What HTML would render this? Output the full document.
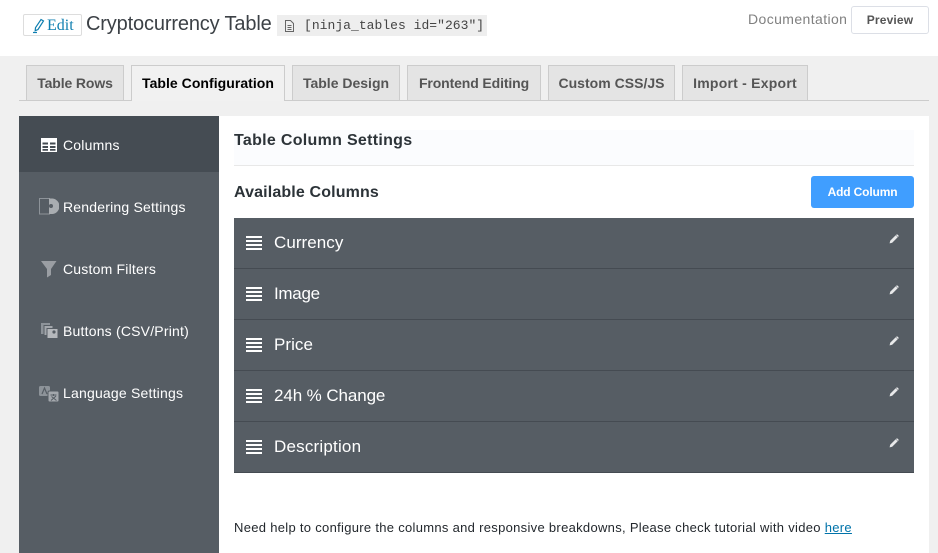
<!DOCTYPE html>
<html><head><meta charset="utf-8">
<style>
html,body{margin:0;padding:0}
body{width:938px;height:553px;overflow:hidden;position:relative;background:#f0f0f0;font-family:"Liberation Sans",sans-serif;-webkit-font-smoothing:antialiased}
.a{position:absolute;white-space:nowrap}
.tab{position:absolute;top:65px;height:35px;box-sizing:border-box;border:1px solid #ccc;border-bottom:0;background:#e4e4e4;color:#555;font-size:14px;font-weight:bold;line-height:35px;text-align:center;letter-spacing:-.12px}
.tab.on{background:#f1f1f1;color:#000;height:36px;z-index:2;letter-spacing:.04px}
.side{position:absolute;left:63px;color:#fff;font-size:14px;line-height:18px;white-space:nowrap;letter-spacing:.2px}
.row{position:absolute;left:234px;width:680px;height:50px;background:#565d64;border-bottom:1px solid #454b52}
.row .t{position:absolute;left:40px;top:15px;color:#fff;font-size:17px;line-height:20px}
.row .b{position:absolute;left:12px;width:16px;height:2px;background:#fff}
.row svg{position:absolute;left:655px;top:16px}
svg{display:block}
</style></head><body>
<div class="a" style="left:0;top:0;width:938px;height:56px;background:#fff"></div>

<div class="a" style="left:23px;top:14px;width:59px;height:22px;box-sizing:border-box;border:1px solid #ddd;border-radius:2px;background:#fff"></div>
<svg class="a" style="left:32px;top:18px" width="14" height="16" viewBox="0 0 14 16" fill="none" stroke="#0f7fb0" stroke-width="1.2"><path d="M9 1.500l2.500 1.500L6 11.500l-2.800 1.200.3-3z"/><path d="M1 14.500h4"/></svg>
<div class="a" style="left:47px;top:16px;font-family:'Liberation Serif',serif;font-size:16px;line-height:20px;color:#0f7fb0">Edit</div>
<div class="a" style="left:86px;top:12px;font-size:20px;line-height:25px;color:#3c4146;letter-spacing:-.15px">Cryptocurrency Table</div>
<div class="a" style="left:277px;top:15px;width:210px;height:21px;background:#eee"></div>
<svg class="a" style="left:284px;top:20px" width="11" height="12" viewBox="0 0 11 12" fill="none" stroke="#666" stroke-width="1"><path d="M1.500.5h5l3 3v8h-8z"/><path d="M3.500 5.500h4M3.500 7.500h4M3.500 9.500h4"/></svg>
<div class="a" style="left:304px;top:18px;font-family:'Liberation Mono',monospace;font-size:13px;line-height:16px;color:#444;letter-spacing:.03px">[ninja_tables id="263"]</div>
<div class="a" style="left:748px;top:10px;font-size:14px;line-height:18px;color:#808080;letter-spacing:.4px">Documentation</div>
<div class="a" style="left:851px;top:6px;width:78px;height:28px;box-sizing:border-box;border:1px solid #dcdfe6;border-radius:3px;background:#fff;color:#555;font-size:12px;font-weight:bold;line-height:26px;text-align:center;letter-spacing:.15px">Preview</div>

<div class="a" style="left:19px;top:100px;width:910px;height:1px;background:#ccc"></div>
<div class="tab" style="left:26px;width:98px">Table Rows</div>
<div class="tab on" style="left:131px;width:154px">Table Configuration</div>
<div class="tab" style="left:292px;width:108px;letter-spacing:0">Table Design</div>
<div class="tab" style="left:407px;width:134px">Frontend Editing</div>
<div class="tab" style="left:548px;width:127px;letter-spacing:.02px">Custom CSS/JS</div>
<div class="tab" style="left:682px;width:126px;letter-spacing:.23px">Import - Export</div>

<div class="a" style="left:19px;top:116px;width:200px;height:437px;background:#565d64"></div>
<div class="a" style="left:19px;top:116px;width:200px;height:56px;background:#454c53"></div>
<div class="a" style="left:219px;top:116px;width:710px;height:437px;background:#fff"></div>

<svg class="a" style="left:41px;top:138px" width="16" height="14" viewBox="0 0 16 14"><path fill="#fff" d="M0 0h16v14H0z"/><path fill="#454c53" d="M1.500 4.500h5.500v2H1.500zM9 4.500h5.500v2H9zM1.500 8h5.500v2H1.500zM9 8h5.500v2H9zM1.500 11h5.500v1.700H1.500zM9 11h5.500v1.700H9z"/></svg>
<div class="side" style="top:136px">Columns</div>

<svg class="a" style="left:39px;top:198px" width="20" height="17" viewBox="0 0 20 17"><path fill="none" stroke="#8d9399" d="M.5.500h10v15.500H.5z"/><path fill="#a9adb1" d="M10 .5h3.500a7.800 7.800 0 0 1 0 15.500H10z"/><circle cx="12" cy="8" r="2" fill="#565d64"/></svg>
<div class="side" style="top:198px">Rendering Settings</div>

<svg class="a" style="left:41px;top:260px" width="16" height="18" viewBox="0 0 16 18"><path fill="#9a9ea3" d="M0 1h15.500L10 9v6l-4 2.500V9z"/></svg>
<div class="side" style="top:260px">Custom Filters</div>

<svg class="a" style="left:41px;top:322px" width="17" height="17" viewBox="0 0 17 17"><path fill="#8d9399" d="M0 1h9v11H0z"/><path fill="#a3a7ac" stroke="#565d64" d="M3 3.500h9v10H3z"/><path fill="#b5b8bc" stroke="#565d64" d="M6 6.500h11v10H6z"/><circle cx="13" cy="10" r="1.600" fill="#565d64"/></svg>
<div class="side" style="top:322px">Buttons (CSV/Print)</div>

<svg class="a" style="left:39px;top:386px" width="20" height="17" viewBox="0 0 20 17"><rect x="0" y="0" width="11" height="10" rx="1.500" fill="#8d9399"/><rect x="9" y="5" width="11" height="11" rx="1.500" fill="#a3a7ac" stroke="#565d64"/><path d="M11.500 9h6M14.500 8v2M12 14.500l5-4.500M12.500 10.500l5 4" stroke="#565d64" stroke-width="1" fill="none"/><path d="M3 8l2.500-6L8 8" stroke="#565d64" stroke-width="1.200" fill="none"/></svg>
<div class="side" style="top:384px">Language Settings</div>

<div class="a" style="left:234px;top:130px;width:680px;height:35px;background:#fbfcfe;border-bottom:1px solid #e8e8e8"></div>
<div class="a" style="left:234px;top:131px;font-size:16px;font-weight:bold;line-height:20px;color:#2c3338;letter-spacing:.3px">Table Column Settings</div>
<div class="a" style="left:234px;top:183px;font-size:16px;font-weight:bold;line-height:20px;color:#2c3338;letter-spacing:.14px">Available Columns</div>
<div class="a" style="left:811px;top:176px;width:103px;height:32px;border-radius:3px;background:#409eff;color:#fff;font-size:12px;font-weight:bold;line-height:32px;text-align:center;letter-spacing:-.15px">Add Column</div>

<div class="row" style="top:218px"><i class="b" style="top:18px"></i><i class="b" style="top:22px"></i><i class="b" style="top:26px"></i><i class="b" style="top:30px"></i><div class="t" style="letter-spacing:.05px">Currency</div><svg width="10" height="10" viewBox="0 0 10 10"><path fill="#e8e9ea" d="M6.700 1.300l2 2L3.200 8.800.6 9.400l.6-2.600zM7.400.6a.9.9 0 0 1 1.200 0l.8.8a.9.9 0 0 1 0 1.200l-.4.400-2-2z"/></svg></div>
<div class="row" style="top:269px"><i class="b" style="top:18px"></i><i class="b" style="top:22px"></i><i class="b" style="top:26px"></i><i class="b" style="top:30px"></i><div class="t" style="letter-spacing:-.3px">Image</div><svg width="10" height="10" viewBox="0 0 10 10"><path fill="#e8e9ea" d="M6.700 1.300l2 2L3.200 8.800.6 9.400l.6-2.600zM7.400.6a.9.9 0 0 1 1.200 0l.8.8a.9.9 0 0 1 0 1.200l-.4.400-2-2z"/></svg></div>
<div class="row" style="top:320px"><i class="b" style="top:18px"></i><i class="b" style="top:22px"></i><i class="b" style="top:26px"></i><i class="b" style="top:30px"></i><div class="t" style="letter-spacing:.05px">Price</div><svg width="10" height="10" viewBox="0 0 10 10"><path fill="#e8e9ea" d="M6.700 1.300l2 2L3.200 8.800.6 9.400l.6-2.600zM7.400.6a.9.9 0 0 1 1.200 0l.8.8a.9.9 0 0 1 0 1.200l-.4.400-2-2z"/></svg></div>
<div class="row" style="top:371px"><i class="b" style="top:18px"></i><i class="b" style="top:22px"></i><i class="b" style="top:26px"></i><i class="b" style="top:30px"></i><div class="t" style="letter-spacing:-.1px">24h % Change</div><svg width="10" height="10" viewBox="0 0 10 10"><path fill="#e8e9ea" d="M6.700 1.300l2 2L3.200 8.800.6 9.400l.6-2.600zM7.400.6a.9.9 0 0 1 1.200 0l.8.8a.9.9 0 0 1 0 1.200l-.4.400-2-2z"/></svg></div>
<div class="row" style="top:422px"><i class="b" style="top:18px"></i><i class="b" style="top:22px"></i><i class="b" style="top:26px"></i><i class="b" style="top:30px"></i><div class="t" style="letter-spacing:.2px">Description</div><svg width="10" height="10" viewBox="0 0 10 10"><path fill="#e8e9ea" d="M6.700 1.300l2 2L3.200 8.800.6 9.400l.6-2.600zM7.400.6a.9.9 0 0 1 1.200 0l.8.8a.9.9 0 0 1 0 1.200l-.4.400-2-2z"/></svg></div>

<div class="a" style="left:234px;top:519px;font-size:13px;line-height:17px;color:#23282d;letter-spacing:.3px">Need help to configure the columns and responsive breakdowns, Please check tutorial with video <span style="color:#0073aa;text-decoration:underline">here</span></div>
</body></html>
